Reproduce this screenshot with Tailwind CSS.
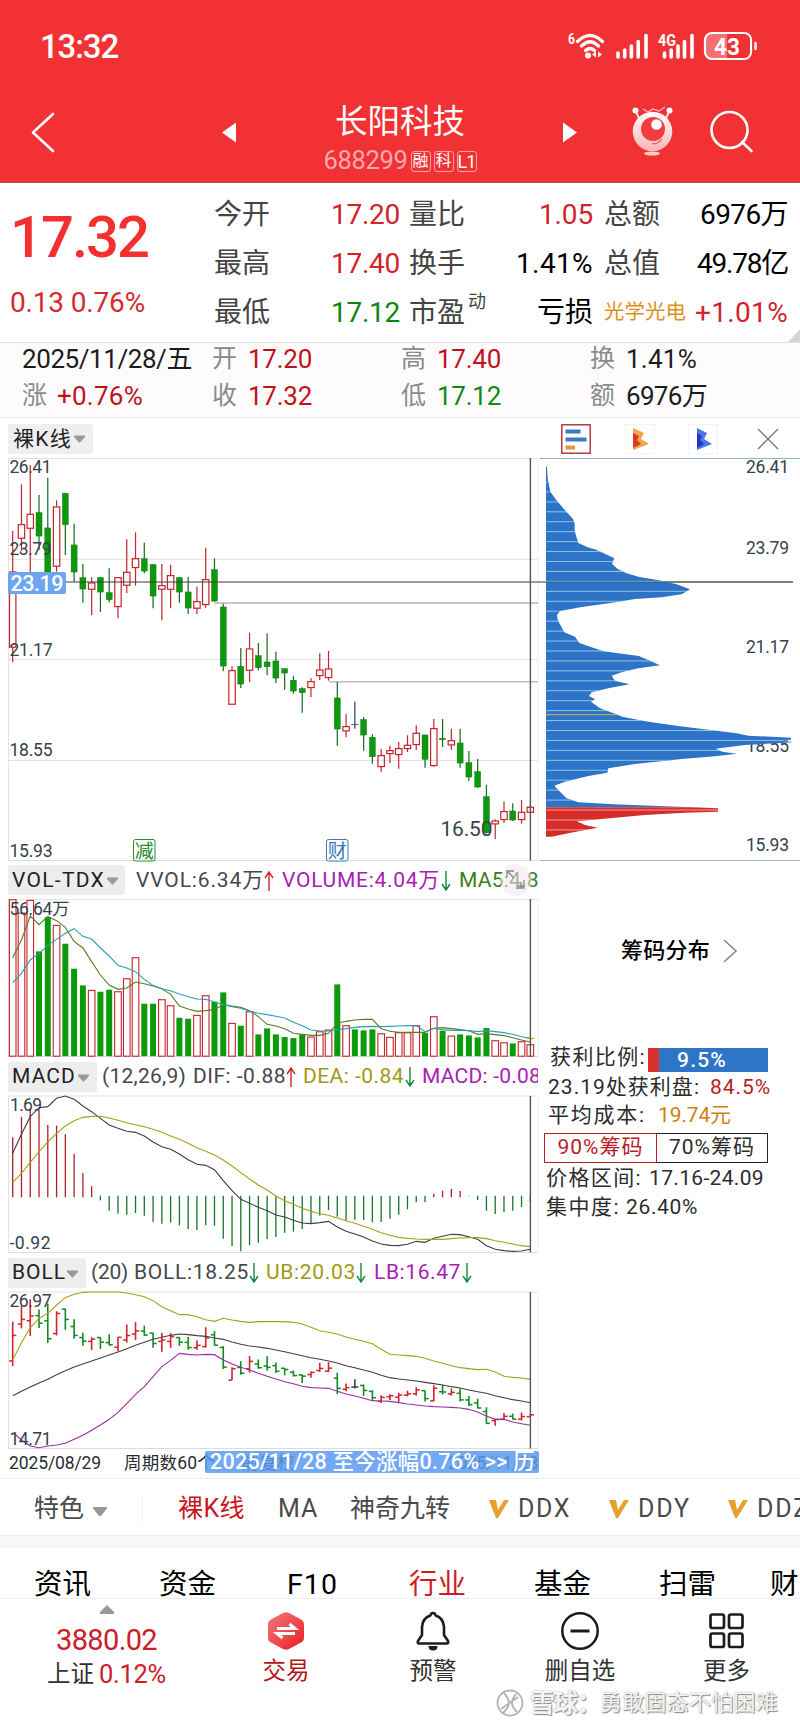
<!DOCTYPE html>
<html lang="zh-CN">
<head>
<meta charset="utf-8">
<title>长阳科技 688299</title>
<script src="https://cdn.jsdelivr.net/npm/@tailwindcss/browser@4"></script>
</head>
<body class="w-[800px] h-[1727px] overflow-hidden bg-white font-['Roboto','Noto_Sans_CJK_SC',sans-serif] text-[#222] whitespace-nowrap leading-none">

<!-- header -->
<header class="h-[183px] bg-[#f13133] border-b border-[#c9403c] text-white">
  <div class="h-[92px] flex items-center pl-[40px] pr-[42px] justify-between">
    <span data-w="78" class="text-[33px] font-medium">13:32</span>
    <svg class="w-[192px] h-[30px]" viewBox="566 31 192 30" fill="none" stroke="#fff" stroke-linecap="round">
      <text x="568" y="44" font-size="15" font-weight="700" fill="#fff" stroke="none" textLength="7" lengthAdjust="spacingAndGlyphs">6</text>
      <path d="M577.500 41.500Q590 29.500 602.500 41.500M581.500 46Q590 37.500 598.500 46M585.500 50.500Q590 46.500 594.500 50.500" stroke-width="3.200"/>
      <circle cx="588" cy="55.500" r="3" fill="#fff" stroke="none"/>
      <path d="M596 51.500v6l-4-3zM598 51.500v6l4-3z" fill="#fff" stroke="none"/>
      <path d="M618 53v4M624.700 50v7M631.400 46v11M638.200 41.500V57M646 35.500V57" stroke-width="3.600"/>
      <text x="658" y="46" font-size="17" font-weight="700" fill="#fff" stroke="none" textLength="18" lengthAdjust="spacingAndGlyphs">4G</text>
      <path d="M664.500 53v4M671.200 50v7M678 46v11M684.500 41.500V57M692 35.500V57" stroke-width="3.600"/>
      <rect x="705" y="33" width="46" height="26" rx="7" fill="#f6706f" stroke-width="2.200"/>
      <path d="M727 34h17a6 6 0 0 1 6 6v12a6 6 0 0 1-6 6H727z" fill="#f13133" stroke="none"/>
      <path d="M755.500 43v6" stroke-width="2.500"/>
      <text x="714" y="54.500" font-size="24" font-weight="700" fill="#fff" stroke="none" textLength="26" lengthAdjust="spacingAndGlyphs">43</text>
    </svg>
  </div>
  <div class="h-[90px] flex items-start pt-[12px]">
    <svg class="w-[40px] h-[50px] ml-[24px] mt-[4px] shrink-0" viewBox="24 108 40 50" fill="none" stroke="#fff" stroke-width="2.600" stroke-linecap="round" stroke-linejoin="round"><path d="M53 114L33 132.500L53 151"/></svg>
    <svg class="w-[20px] h-[30px] ml-[156px] mt-[14px] shrink-0" viewBox="220 118 20 30"><path d="M236 122.500v20L222 132.500z" fill="#fff"/></svg>
    <div class="w-[320px] shrink-0 flex flex-col items-center pt-px">
      <span class="text-[32.500px] leading-[34px]">长阳科技</span>
      <div class="flex items-center gap-[3px] mt-[11px] h-[22px]">
        <span data-w="84" class="text-[25.500px] text-[#f9aaaa]">688299</span>
        <span class="w-[20px] h-[21px] border border-[#f9a5a5] rounded-[3px] text-[16px] leading-[18px] text-center">融</span>
        <span class="w-[20px] h-[21px] border border-[#f9a5a5] rounded-[3px] text-[16px] leading-[18px] text-center">科</span>
        <span class="w-[20px] h-[21px] border border-[#f9a5a5] rounded-[3px] text-[18px] leading-[20px] text-center tracking-[-1px]">L1</span>
      </div>
    </div>
    <svg class="w-[20px] h-[30px] mt-[14px] shrink-0" viewBox="560 118 20 30"><path d="M563 122.500v20l14-10z" fill="#fff"/></svg>
    <svg class="w-[44px] h-[54px] ml-[50px] shrink-0" viewBox="630 106 44 54">
      <defs><linearGradient id="pk" x1="0" y1="0" x2="0" y2="1"><stop offset="0" stop-color="#fff"/><stop offset="1" stop-color="#f9b4b4"/></linearGradient></defs>
      <path d="M643 111l5 3 5-3 6 2 6-4" fill="none" stroke="#fbb" stroke-width="1.200"/>
      <path d="M636 114l4 8M669 114l-4 8" stroke="#fdd" stroke-width="2"/>
      <circle cx="635.500" cy="112.500" r="3" fill="#fff"/><circle cx="669.500" cy="112.500" r="3" fill="#fff"/>
      <circle cx="652.500" cy="133.500" r="19.800" fill="url(#pk)"/>
      <circle cx="653" cy="131" r="12" fill="#f13d3e"/><circle cx="656.500" cy="126.500" r="5.300" fill="#fff"/>
      <path d="M652 145.500q7 1 9.500-4.500" fill="none" stroke="#e66" stroke-width="1.500"/>
      <ellipse cx="652" cy="155.500" rx="8" ry="2" fill="#fcc"/>
    </svg>
    <svg class="w-[48px] h-[48px] ml-[34px] mt-[3px] shrink-0" viewBox="708 108 48 48" fill="none" stroke="#fff" stroke-width="2.600" stroke-linecap="round"><circle cx="729.500" cy="131" r="18"/><path d="M742 143l9.500 9"/></svg>
  </div>
</header>

<!-- quote -->
<section class="relative h-[160px] border-b border-[#dedede] flex pt-[7px] text-[28px]">
  <div class="w-[214px] pl-[10px] flex flex-col">
    <span data-w="138" class="text-[58px] leading-[60px] font-medium text-[#f2302f] mt-[17px]">17.32</span>
    <span data-w="135" class="text-[#d62a2c] leading-[30px] mt-[21px]">0.13 0.76%</span>
  </div>
  <div class="w-[186px] mr-[9px]">
    <div class="h-[49px] flex items-center justify-between"><span class="text-[#444]">今开</span><span data-w="69" class="text-[#d2232a]">17.20</span></div>
    <div class="h-[49px] flex items-center justify-between"><span class="text-[#444]">最高</span><span data-w="69" class="text-[#d2232a]">17.40</span></div>
    <div class="h-[49px] flex items-center justify-between"><span class="text-[#444]">最低</span><span data-w="69" class="text-[#0a870f]">17.12</span></div>
  </div>
  <div class="w-[184px] mr-[11px]">
    <div class="h-[49px] flex items-center justify-between"><span class="text-[#444]">量比</span><span data-w="54" class="text-[#d2232a]">1.05</span></div>
    <div class="h-[49px] flex items-center justify-between"><span class="text-[#444]">换手</span><span data-w="77" class="text-black">1.41%</span></div>
    <div class="h-[49px] flex items-center justify-between"><span class="text-[#444] flex">市盈<span class="text-[18px] ml-[3px] -mt-[6px]">动</span></span><span class="text-black">亏损</span></div>
  </div>
  <div class="w-[184px]">
    <div class="h-[49px] flex items-center justify-between"><span class="text-[#444]">总额</span><span data-w="88" class="text-black">6976万</span></div>
    <div class="h-[49px] flex items-center justify-between"><span class="text-[#444]">总值</span><span data-w="91" class="text-black">49.78亿</span></div>
    <div class="h-[49px] flex items-center justify-between"><span class="text-[20.500px] text-[#df9018]">光学光电</span><span data-w="93" class="text-[#d2232a]">+1.01%</span></div>
  </div>
  <svg class="absolute right-0 bottom-0 w-[12px] h-[13px]" viewBox="0 0 12 13"><path d="M12 0v13H0z" fill="#d5d5d5"/></svg>
</section>

<!-- selected day -->
<section class="h-[75px] bg-[#fdfbfc] border-b border-[#ececec] text-[26px] text-[#1c1c1c]">
  <div class="h-[31px] flex items-center pl-[22px]">
    <span data-w="170">2025/11/28/五</span>
    <span class="ml-[20px] w-[36px] text-[25px] text-[#8b8b8b]">开</span><span class="w-[153px] text-[#c1121b]"><span data-w="64">17.20</span></span>
    <span class="w-[36px] text-[25px] text-[#8b8b8b]">高</span><span class="w-[153px] text-[#c1121b]"><span data-w="64">17.40</span></span>
    <span class="w-[36px] text-[25px] text-[#8b8b8b]">换</span><span data-w="71">1.41%</span>
  </div>
  <div class="h-[43px] flex items-center pl-[22px]">
    <span class="w-[35px] text-[25px] text-[#8b8b8b]">涨</span><span class="w-[155px] text-[#c1121b]"><span data-w="86">+0.76%</span></span>
    <span class="w-[36px] text-[25px] text-[#8b8b8b]">收</span><span class="w-[153px] text-[#c1121b]"><span data-w="64">17.32</span></span>
    <span class="w-[36px] text-[25px] text-[#8b8b8b]">低</span><span class="w-[153px] text-[#0f8a14]"><span data-w="64">17.12</span></span>
    <span class="w-[36px] text-[25px] text-[#8b8b8b]">额</span><span data-w="81">6976万</span>
  </div>
</section>

<!-- charts -->
<main class="flex h-[1061px] border-b border-[#ececec]">
  <div class="w-[540px] flex flex-col">
    <div class="h-[40px] flex items-center pl-[8px] pt-[2px]">
      <div class="w-[85px] h-[30px] bg-[#efefef] rounded-[3px] flex items-center pl-[5px]"><span data-w="59" class="text-[21px]">裸K线</span><svg class="w-[13px] h-[8px] ml-[1px] shrink-0" viewBox="0 0 13 8"><path d="M1 .5h11L12 2 7 7.500H6L1 2z" fill="#999"/></svg></div>
    </div>
    <svg id="kline" class="w-[540px] h-[404px] shrink-0" viewBox="0 458 540 404"></svg>

    <div class="h-[36px] w-[538px] overflow-hidden relative flex items-center pt-px pl-[8px] text-[21px]">
      <div class="w-[117px] h-[30px] shrink-0 bg-[#ededed] rounded-[3px] flex items-center pl-[4px] -mt-[1px]"><span data-w="93">VOL-TDX</span><svg class="w-[13px] h-[8px] ml-[1px] mt-[2px] shrink-0" viewBox="0 0 13 8"><path d="M1 .5h11L12 2 7 7.500H6L1 2z" fill="#999"/></svg></div>
      <span data-w="128" class="ml-[11px] text-[#44484c]">VVOL:6.34万</span>
      <svg class="w-[10px] h-[22px] shrink-0" viewBox="0 0 10 22"><path d="M5 21V2M1 8l4-6 4 6" fill="none" stroke="#d2232a" stroke-width="1.400"/></svg>
      <span data-w="158" class="ml-[8px] text-[#a820b0]">VOLUME:4.04万</span>
      <svg class="w-[10px] h-[22px] shrink-0 ml-[1px]" viewBox="0 0 10 22"><path d="M5 1v19M1 14l4 6 4-6" fill="none" stroke="#16883c" stroke-width="1.400"/></svg>
      <span data-w="113" class="ml-[8px] text-[#3b7d20]">MA5:4.84万</span>
      <svg class="absolute right-[5px] top-[1px] w-[34px] h-[34px]" viewBox="0 0 34 34"><circle cx="17" cy="17" r="16" fill="#f3e6f5" fill-opacity=".55"/><path d="M8 14V8h7M8 8l7 7M17 25h8V17M19 23h5M22 19v6" fill="none" stroke="#888" stroke-width="1.300"/></svg>
    </div>
    <svg id="vol" class="w-[540px] h-[160px] shrink-0" viewBox="0 898 540 160"></svg>

    <div class="h-[36px] w-[538px] overflow-hidden flex items-center pt-px pl-[8px] text-[21px]">
      <div class="w-[89px] h-[30px] shrink-0 bg-[#ededed] rounded-[3px] flex items-center pl-[4px]"><span data-w="64">MACD</span><svg class="w-[13px] h-[8px] ml-[1px] mt-[2px] shrink-0" viewBox="0 0 13 8"><path d="M1 .5h11L12 2 7 7.500H6L1 2z" fill="#999"/></svg></div>
      <span data-w="84" class="ml-[5px] text-[#44484c]">(12,26,9)</span>
      <span data-w="93" class="ml-[7px] text-[#44484c]">DIF: -0.88</span>
      <svg class="w-[10px] h-[22px] shrink-0" viewBox="0 0 10 22"><path d="M5 21V2M1 8l4-6 4 6" fill="none" stroke="#d2232a" stroke-width="1.400"/></svg>
      <span data-w="101" class="ml-[7px] text-[#a09a10]">DEA: -0.84</span>
      <svg class="w-[10px] h-[22px] shrink-0 ml-[1px]" viewBox="0 0 10 22"><path d="M5 1v19M1 14l4 6 4-6" fill="none" stroke="#16883c" stroke-width="1.400"/></svg>
      <span data-w="119" class="ml-[7px] text-[#a820b0]">MACD: -0.08</span>
    </div>
    <svg id="macd" class="w-[540px] h-[160px] shrink-0" viewBox="0 1094 540 160"></svg>

    <div class="h-[36px] w-[538px] overflow-hidden flex items-center pt-px pl-[8px] text-[21px]">
      <div class="w-[78px] h-[30px] shrink-0 bg-[#ededed] rounded-[3px] flex items-center pl-[4px]"><span data-w="54">BOLL</span><svg class="w-[13px] h-[8px] mt-[2px] shrink-0" viewBox="0 0 13 8"><path d="M1 .5h11L12 2 7 7.500H6L1 2z" fill="#999"/></svg></div>
      <span data-w="37" class="ml-[5px] text-[#44484c]">(20)</span>
      <span data-w="115" class="ml-[6px] text-[#44484c]">BOLL:18.25</span>
      <svg class="w-[10px] h-[22px] shrink-0" viewBox="0 0 10 22"><path d="M5 1v19M1 14l4 6 4-6" fill="none" stroke="#16883c" stroke-width="1.400"/></svg>
      <span data-w="90" class="ml-[7px] text-[#a09a10]">UB:20.03</span>
      <svg class="w-[10px] h-[22px] shrink-0" viewBox="0 0 10 22"><path d="M5 1v19M1 14l4 6 4-6" fill="none" stroke="#16883c" stroke-width="1.400"/></svg>
      <span data-w="87" class="ml-[8px] text-[#a820b0]">LB:16.47</span>
      <svg class="w-[10px] h-[22px] shrink-0 ml-[1px]" viewBox="0 0 10 22"><path d="M5 1v19M1 14l4 6 4-6" fill="none" stroke="#16883c" stroke-width="1.400"/></svg>
    </div>
    <svg id="boll" class="w-[540px] h-[160px] shrink-0" viewBox="0 1290 540 160"></svg>

    <div class="relative h-[28px] flex items-center pl-[9px] text-[17.500px] text-[#2a2d30]">
      <span data-w="92">2025/08/29</span>
      <span data-w="91" class="ml-[23px]">周期数60个</span>
      <span data-w="54" class="ml-[26px]">前复权</span>
      <span data-w="90" class="ml-[153px]">2025/11/28</span>
      <div class="absolute left-[205px] top-[1px] w-[334px] h-[22px] bg-[#5a9af0]/85 rounded-[2px] overflow-hidden flex items-center pl-[5px] text-[21.500px] font-medium text-white"><span data-w="325">2025/11/28 至今涨幅0.76% &gt;&gt; 历</span></div>
    </div>
  </div>

  <div class="w-[260px] flex flex-col">
    <div class="h-[40px] flex items-center pl-[21px] pt-[2px]">
      <svg class="w-[30px] h-[30px]" viewBox="0 0 30 30"><rect x=".8" y=".8" width="28.400" height="28.400" fill="#fff" stroke="#a81e22" stroke-width="1.300"/><path d="M4.500 7.500h15M4.500 15.500h21" stroke="#3f78c8" stroke-width="4"/><path d="M4.500 23.500H14" stroke="#dd9a3a" stroke-width="4"/></svg>
      <svg class="w-[30px] h-[30px] ml-[34px]" viewBox="0 0 30 30"><rect x=".5" y=".5" width="29" height="29" fill="#fff" stroke="#f3f3f3"/><path d="M8 4l11 5-3 6 8 5-16 6z" fill="#f0a848"/><path d="M8 9l6 3-2 4 4 4-8 4z" fill="#da3a22"/></svg>
      <svg class="w-[30px] h-[30px] ml-[33px]" viewBox="0 0 30 30"><rect x=".5" y=".5" width="29" height="29" fill="#fff" stroke="#f3f3f3"/><path d="M9 4l10 5-3 6 8 5-15 6z" fill="#4a78e0"/><path d="M9 9l5 3-2 4 4 4-7 4z" fill="#2430d0"/></svg>
      <svg class="w-[22px] h-[22px] ml-[39px]" viewBox="0 0 22 22"><path d="M1 1l20 20M21 1L1 21" stroke="#777" stroke-width="1.300"/></svg>
    </div>
    <svg id="chips" class="w-[260px] h-[404px] shrink-0" viewBox="540 458 260 404"></svg>
    <div class="flex items-center pl-[81px] mt-[76px] h-[26px]"><span data-w="89" class="text-[22px] text-black font-medium">筹码分布</span><svg class="w-[16px] h-[26px] ml-[12px]" viewBox="0 0 16 26"><path d="M2 2l12 11L2 24" fill="none" stroke="#888" stroke-width="1.600"/></svg></div>
    <div class="mt-[78px] text-[21px] text-[#2c2c2c]">
      <div class="h-[31px] flex items-center pl-[10px]"><span data-w="96">获利比例:</span>
        <div class="ml-[2px] mt-[4px] w-[120px] h-[24px] bg-[#2e75c8] border-l-[11px] border-[#d93030] text-white font-medium leading-[24px] pl-[18px]"><span data-w="50">9.5%</span></div></div>
      <div class="h-[28px] flex items-center pl-[8px]"><span data-w="152">23.19处获利盘:</span><span data-w="61" class="ml-[10px] text-[#b81c26]">84.5%</span></div>
      <div class="h-[29px] flex items-center pl-[8px]"><span data-w="98">平均成本:</span><span data-w="73" class="ml-[12px] text-[#d08010]">19.74元</span></div>
      <div class="h-[34px] flex items-center pl-[4px] pt-px">
        <span class="w-[113px] h-[30px] border border-[#b81c26] text-[#b81c26] leading-[27px] text-center"><span data-w="86">90%筹码</span></span>
        <span class="w-[111px] h-[30px] border border-l-0 border-[#222] leading-[27px] text-center"><span data-w="86">70%筹码</span></span></div>
      <div class="h-[28px] flex items-center pl-[6px]"><span data-w="96">价格区间:</span><span data-w="115" class="ml-[7px]">17.16-24.09</span></div>
      <div class="h-[31px] flex items-center pl-[6px]"><span data-w="74">集中度:</span><span data-w="72" class="ml-[6px]">26.40%</span></div>
    </div>
  </div>
</main>

<!-- indicator tabs -->
<nav class="h-[57px] flex items-center pt-[3px] pl-[34px] text-[25px] text-[#4a4a4a] overflow-hidden border-b border-[#eee]">
  <span class="shrink-0">特色</span><svg class="w-[16px] h-[11px] ml-[8px] mt-[6px] shrink-0" viewBox="0 0 16 11"><path d="M1 1h14v1.500L9 10H7L1 2.500z" fill="#999"/></svg>
  <span class="w-px h-[27px] bg-[#eee] ml-[34px] shrink-0"></span>
  <span data-w="67" class="ml-[35px] text-[#c9151e]">裸K线</span>
  <span data-w="40" class="ml-[33px]">MA</span>
  <span class="ml-[32px] shrink-0">神奇九转</span>
  <svg class="w-[20px] h-[20px] ml-[39px] shrink-0" viewBox="0 0 20 20"><path d="M0 1h7l2 10 6-10h5L9 19H7z" fill="#e5a030"/></svg>
  <span data-w="53" class="ml-[9px]">DDX</span>
  <svg class="w-[20px] h-[20px] ml-[38px] shrink-0" viewBox="0 0 20 20"><path d="M0 1h7l2 10 6-10h5L9 19H7z" fill="#e5a030"/></svg>
  <span data-w="53" class="ml-[9px]">DDY</span>
  <svg class="w-[20px] h-[20px] ml-[37px] shrink-0" viewBox="0 0 20 20"><path d="M0 1h7l2 10 6-10h5L9 19H7z" fill="#e5a030"/></svg>
  <span data-w="53" class="ml-[9px]">DDZ</span>
</nav>
<div class="h-[12px] bg-[#f7f7f7]"></div>

<!-- content tabs -->
<nav class="h-[51px] flex items-start pt-[22px] pl-[34px] text-[28.500px] leading-[30px] text-black overflow-hidden border-b border-[#ececec]">
  <span class="w-[125px] shrink-0">资讯</span><span class="w-[128px] shrink-0">资金</span><span class="w-[122px] shrink-0"><span data-w="51">F10</span></span>
  <span class="w-[125px] shrink-0 text-[#cf1c22]">行业</span><span class="w-[125px] shrink-0">基金</span><span class="w-[111px] shrink-0">扫雷</span><span>财</span>
</nav>

<!-- bottom bar -->
<footer class="relative h-[128px] flex text-[23.500px] text-[#333]">
  <div class="w-[213px] flex flex-col items-center pt-[6px]">
    <svg class="w-[14px] h-[9px]" viewBox="0 0 14 9"><path d="M7 0l7 7v2H0V7z" fill="#999"/></svg>
    <span data-w="101" class="text-[29px] leading-[30px] text-[#c9202a] mt-[11px]">3880.02</span>
    <div class="flex items-center h-[30px] mt-[5px]"><span>上证</span><span data-w="67" class="text-[25.500px] text-[#c9202a] ml-[5px]">0.12%</span></div>
  </div>
  <div class="w-[146px] flex flex-col items-center pt-[11px]">
    <svg class="w-[40px] h-[42px]" viewBox="0 0 40 42"><defs><linearGradient id="hx" x1="0" y1="0" x2="1" y2="1"><stop offset="0" stop-color="#f27a7a"/><stop offset="1" stop-color="#e81e26"/></linearGradient></defs><path d="M17 3q3-1.600 6 0l12 6.500q3 1.500 3 5v13q0 3.500-3 5L23 39q-3 1.600-6 0L5 32.500q-3-1.500-3-5v-13q0-3.500 3-5z" fill="url(#hx)"/><path d="M11 18.500h18l-5.500-4.500M29 23.500H11l5.500 4.500" fill="none" stroke="#fff" stroke-width="3"/></svg>
    <span class="mt-[8px] text-[#b81420]">交易</span>
  </div>
  <div class="w-[148px] flex flex-col items-center pt-[11px]">
    <svg class="w-[40px] h-[42px]" viewBox="0 0 40 42"><path d="M20 3q2 0 2.600 2.500Q30.500 8 31 17v8l4 6q1 2.500-1.500 2.500h-27Q4 33.500 5 31l4-6v-8Q9.500 8 17.400 5.500 18 3 20 3z" fill="none" stroke="#1c1c1c" stroke-width="2.600" stroke-linejoin="round"/><path d="M15.500 36h9q0 4.500-4.500 4.500T15.500 36z" fill="#1c1c1c"/></svg>
    <span class="mt-[8px]">预警</span>
  </div>
  <div class="w-[146px] flex flex-col items-center pt-[11px]">
    <svg class="w-[40px] h-[42px]" viewBox="0 0 40 42"><circle cx="20" cy="21" r="17.700" fill="none" stroke="#1c1c1c" stroke-width="2.500"/><path d="M10.500 21h19" stroke="#1c1c1c" stroke-width="3"/></svg>
    <span class="mt-[8px]">删自选</span>
  </div>
  <div class="w-[147px] flex flex-col items-center pt-[11px]">
    <svg class="w-[40px] h-[42px]" viewBox="0 0 40 42" fill="none" stroke="#1c1c1c" stroke-width="2.700"><rect x="3.500" y="4.500" width="13.500" height="13.500" rx="2"/><rect x="22" y="4.500" width="13.500" height="13.500" rx="2"/><rect x="3.500" y="23.500" width="13.500" height="13.500" rx="2"/><rect x="22" y="23.500" width="13.500" height="13.500" rx="2"/></svg>
    <span class="mt-[8px]">更多</span>
  </div>
  <div class="absolute left-[496px] top-[90px] h-[28px] flex items-center text-[#f4f4f4] [text-shadow:1px_1px_1px_#888,0_0_2px_#aaa]">
    <svg class="w-[28px] h-[28px]" viewBox="0 0 28 28" fill="none" stroke="#b5b5b5"><circle cx="14" cy="14" r="12.500" stroke-width="1.800"/><path d="M8 4q5 6 5 10T7 24M20 5q-4 5-4 9t5 9M5 20L22 8" stroke-width="2"/></svg>
    <span data-w="70" class="ml-[6px] text-[25px] font-bold">雪球：</span><span data-w="178" class="text-[22px]">勇敢固态不怕困难</span>
  </div>
</footer>

<script>
const runs = [...document.querySelectorAll('[data-w]')];
function fitRuns() {
  runs.forEach(e => { e.style.cssText = 'display:inline-block;flex-shrink:0;width:max-content;letter-spacing:0'; });
  const widths = runs.map(e => e.getBoundingClientRect().width);
  runs.forEach((e, i) => {
    const w = +e.dataset.w;
    e.style.letterSpacing = ((w - widths[i]) / e.textContent.length) + 'px';
    e.style.width = w + 'px';
  });
}
fitRuns();
new ResizeObserver(fitRuns).observe(document.body);
new MutationObserver(fitRuns).observe(document.head, { childList: true });
addEventListener('load', () => { fitRuns(); requestAnimationFrame(fitRuns); setTimeout(fitRuns, 60); });
document.fonts.ready.then(fitRuns);

const X = i => 12.7 + i * 8.773;
const RED = '#c4242b', GRN = '#0a9a0a', DK = '#17691f';
const line = (x1, y1, x2, y2, c, w = 1) => `<line x1="${x1}" y1="${y1}" x2="${x2}" y2="${y2}" stroke="${c}" stroke-width="${w}"/>`;
const rect = (x, y, w, h, f, s = 'none', sw = 1.1) => `<rect x="${x}" y="${y}" width="${w}" height="${h}" fill="${f}" stroke="${s}" stroke-width="${sw}"/>`;
const text = (s, x, y, w, size = 17.5, c = '#36424c', wt = 400) => `<text x="${x}" y="${y}" font-size="${size}" fill="${c}" font-weight="${wt}" textLength="${w}">${s}</text>`;
const poly = (a, base, c) => `<polyline fill="none" stroke="${c}" stroke-width="1.1" points="${a.map((v, i) => X(i) + ',' + (base + v / 3)).join(' ')}"/>`;
const frame = (t, b) => line(8, t, 538, t, '#e2e2e2') + line(8, b, 538, b, '#dcdcdc') + line(8.5, t, 8.5, b, '#e2e2e2') + line(538, t, 538, b, '#f0f0f0');

// type, high, body top, body bottom, low
const K = `r348 470 697 742,r208 328 370 408,r150 297 340 475,g240 294 362 405,g188 340 500 537,r256 275 454 470,g233 236 328 420,g326 391 470 500,g447 489 521 563,r487 503 523 600,g486 489 530 591,g460 534 553 562,r487 487 575 610,r373 471 511 534,r352 430 458 512,g383 432 467 475,g447 450 542 580,r447 511 523 616,r449 481 523 580,g486 489 530 563,g485 532 578 597,r515 559 580 597,r398 493 569 578,g430 465 557 561,g566 577 752 769,r754 766 868 868,g699 755 806 819,r653 701 766 801,g684 723 757 766,g655 742 754 781,g710 739 788 804,g760 762 773 824,g782 797 827 836,g817 822 832 893,r790 799 818 846,r715 764 782 795,r708 761 788 797,g801 850 941 992,r898 934 948 967,d860 929 929 941,g907 915 959 1007,g958 968 1024 1046,r1002 1021 1055 1070,r992 1006 1016 1044,r981 1000 1019 1061,r961 990 1001 1011,r931 954 989 1005,g959 961 1032 1058,r912 940 1052 1055,g912 971 973 996,r941 976 990 1005,g941 985 1043 1058,g1008 1044 1085 1098,g1032 1071 1115 1118,g1109 1146 1252 1256,r1213 1217 1227 1273,r1160 1189 1214 1224,g1165 1189 1214 1218,r1155 1191 1214 1226,r1170 1176 1192 1192`
  .split(',').map(s => [s[0], ...s.slice(1).split(' ').map(Number)]);

let s = frame(458.5, 860.5) + [559.3, 659.5, 760.5].map(y => line(8, y, 538, y, '#e2e2e2')).join('');
s += line(215, 603, 538, 603, '#c6c6ca', 2) + line(329, 681.8, 538, 681.8, '#bcbcbc', 1.6);
K.forEach(([t, h, a, b, l], i) => {
  const x = X(i), y = v => 415 + v / 3;
  if (t == 'r') s += line(x, y(h), x, y(a), RED, 1.2) + line(x, y(b), x, y(l), RED, 1.2) + rect(x - 3.2, y(a) + .3, 6.4, Math.max(1.5, (b - a) / 3 - .4), 'none', RED, 1.2);
  else { const c = t == 'd' ? '#333d55' : GRN; s += line(x, y(h), x, y(l), t == 'd' ? c : DK, 1.2) + rect(x - (t == 'd' ? 3.6 : 3), y(a) - .4, t == 'd' ? 7.2 : 6, (b - a) / 3 + .8, c, t == 'd' ? 'none' : DK, .4); }
});
s += line(8, 582, 540, 582, '#3c3c3c', 1.2) + line(530.4, 458, 530.4, 860.5, '#555', 1.4);
s += text('26.41', 9.500, 473, 42) + text('23.79', 9.500, 555, 42) + text('21.17', 9.500, 655.500, 43) + text('18.55', 9.500, 756, 43) + text('15.93', 9.500, 856.500, 43);
s += `<rect x="8" y="572" width="58" height="22" rx="2" fill="#6ea5f2"/>` + text('23.19', 10.500, 590.500, 53, 21.5, '#fff', 500);
s += text('16.50', 440.500, 836, 52, 21);
const tag = (c, x, k) => `<rect x="${x}" y="839.5" width="21.500" height="21.500" rx="2" fill="#fff" stroke="${k}" stroke-width="1"/>` + text(c, x + 1.2, 857.500, 19, 19, k, 400);
s += tag('减', 133.5, '#2a8a30') + tag('财', 326.5, '#3878b8');
kline.innerHTML = s;

const V = [118,158,120,273,170,195,250,325,375,390,394,388,394,355,292,430,430,418,436,472,475,465,406,424,396,489,496,454,522,504,522,530,533,523,530,514,509,372,496,507,510,507,520,531,517,517,496,518,469,511,527,522,525,531,503,541,547,549,544,553];
s = frame(899.7, 1056.5);
V.forEach((v, i) => { const r = K[i][0] == 'r' || i == 38, y = 860 + v / 3;
  s += rect(X(i) - (r ? 3.3 : 3), y + .4, r ? 6.6 : 6, 1055.8 - y, r ? '#fffdfd' : GRN, r ? RED : 'none', 1.1); });
s += poly([293,240,168,194,169,182,202,244,264,305,345,375,388,384,366,371,378,386,403,438,447,454,452,449,434,438,442,452,470,493,498,506,520,523,526,526,520,490,484,480,478,478,506,514,517,517,517,517,505,503,506,509,512,523,521,524,527,533,540,546], 860, '#5a7d28');
s += poly([368,340,300,280,256,238,220,206,229,237,264,288,316,324,335,358,376,386,392,402,410,417,418,426,434,440,445,454,460,464,469,474,487,497,510,513,513,509,506,502,500,499,500,499,498,497,497,515,505,509,511,511,512,515,512,515,518,523,530,535], 860, '#2c9fb4');
s += line(527, 1038.5, 534, 1038.5, '#b8b020', 1.2) + line(530.4, 899, 530.4, 1056.5, '#555', 1.4) + text('56.64万', 9.5, 914.5, 60);
vol.innerHTML = s;

const M = [832,771,745,750,795,797,823,881,939,979,1021,1052,1061,1064,1059,1067,1086,1091,1088,1096,1107,1110,1096,1097,1136,1158,1174,1155,1148,1137,1131,1118,1115,1107,1092,1067,1050,1070,1082,1079,1080,1087,1086,1076,1064,1048,1027,1027,1001,992,987,993,1009,1020,1052,1062,1056,1052,1041,1025];
s = frame(1096, 1252.5);
M.forEach((v, i) => { s += v < 1008 ? line(X(i), 860 + v / 3, X(i), 1197.3, '#b02028', 1.3) : line(X(i), 1195.7, X(i), 860 + v / 3, '#17752a', 1.3); });
s += poly([880,823,770,743,740,715,708,718,738,755,775,795,805,814,817,828,846,860,868,882,899,913,916,929,962,992,1018,1030,1042,1052,1065,1071,1081,1089,1091,1088,1084,1101,1114,1122,1131,1143,1152,1156,1157,1153,1144,1147,1135,1129,1123,1124,1130,1138,1157,1168,1172,1174,1173,1168], 860, '#3c4044');
s += poly([967,940,907,875,846,820,798,782,772,769,769,774,781,788,794,800,808,817,828,838,850,863,874,885,900,918,938,957,975,990,1008,1022,1033,1045,1054,1061,1066,1074,1082,1090,1099,1108,1118,1126,1132,1135,1137,1138,1138,1138,1136,1134,1133,1133,1136,1142,1147,1152,1157,1160], 860, '#a8a018');
s += line(530.4, 1096, 530.4, 1252.5, '#555', 1.4) + text('1.69', 10, 1110.5, 32) + text('-0.92', 9.5, 1249, 41);
macd.innerHTML = s;

s = frame(1292, 1448.5);
K.forEach(([t, h, a, b, l], i) => { const x = X(i), y = v => 1250 + (215 + (v - 348) * .3376) / 3, c = t == 'r' ? '#d2242c' : t == 'd' ? '#333d55' : '#128a20';
  const o = t == 'g' ? a : b, cl = t == 'g' ? b : a;
  s += line(x, y(h), x, y(l), c, 1.6) + line(x - 3.6, y(o), x, y(o), c, 1.5) + line(x, y(cl), x + 3.6, y(cl), c, 1.5); });
s += poly([330,278,233,205,190,165,143,133,127,126,126,126,126,129,134,140,152,170,182,194,194,200,209,214,205,210,214,217,215,215,215,215,217,222,232,242,247,252,261,268,274,281,298,313,315,317,319,325,333,340,347,353,356,359,358,366,379,382,384,388], 1250, '#a8a018');
s += poly([437,424,411,399,388,374,362,351,342,333,324,315,306,296,286,277,268,262,256,252,254,257,259,264,268,276,283,288,291,295,300,305,311,317,323,328,333,339,347,353,360,367,376,383,387,390,393,397,401,405,410,414,420,425,430,437,443,449,453,458], 1250, '#3c4044');
s += poly([547,570,588,593,588,585,580,568,556,541,525,508,487,461,433,410,380,350,331,310,313,315,313,314,330,342,352,360,370,379,387,395,401,409,413,414,415,424,432,438,445,452,453,454,458,462,465,468,470,471,472,474,478,486,498,508,508,516,521,526], 1250, '#9830a0');
s += line(530.4, 1292, 530.4, 1448.5, '#555', 1.4) + text('26.97', 9.5, 1306.5, 42) + text('14.71', 9.5, 1445, 42);
boll.innerHTML = s;

// chip distribution outline as offset,price-row pairs
const B = '33,155 36,155 38,190 46,230 66,258 92,288 114,312 119,325 119,348 124,365 130,384 158,397 184,404 238,430 231,446 248,462 275,475 310,485 380,497 425,508 465,523 440,538 380,547 300,552 232,563 140,576 75,588 66,600 68,615 88,652 120,665 133,684 205,709 312,723 375,751 310,760 262,771 230,782 240,797 283,808 220,820 170,832 162,843 180,852 168,860 195,880 240,896 262,905 300,913 340,920 430,933 520,944 605,955 640,962 768,968 768,974 740,976 774,982 630,990 542,1001 562,1010 605,1016 540,1024 440,1032 365,1040 300,1047 220,1060 217,1073 160,1083 90,1100 58,1112 75,1130 95,1150 130,1162 235,1168 390,1174 470,1177 33,1177';
const R = '33,1177 470,1177 549,1180 549,1190 450,1193 330,1200 200,1212 125,1219 150,1230 188,1238 130,1249 75,1260 50,1265 33,1265';
let stripes = ''; for (let y = 201; y < 1265; y += 29.82) stripes += `<line x1="33" x2="790" y1="${y}" y2="${y}" stroke="${y > 1177 ? '#f5b0b0' : '#9ed2f0'}" stroke-width="2.600"/>`;
s = line(540, 458.5, 800, 458.5, '#8fb0bc', 1.2) + line(540, 860.5, 800, 860.5, '#a5b2b8', 1.2) + line(540, 582, 793, 582, '#3c3c3c', 1.2);
[['26.41', 473], ['23.79', 554], ['21.17', 653], ['18.55', 751.5], ['15.93', 851]].forEach(([t, y]) => s += text(t, 746, y, 43));
s += `<g transform="translate(535 415) scale(.33333)"><clipPath id="cp"><polygon points="${B}"/><polygon points="${R}"/></clipPath><polygon points="${B}" fill="#2d73c6"/><polygon points="${R}" fill="#d62c2a"/><g clip-path="url(#cp)">${stripes}<line x1="33" x2="262" y1="899" y2="899" stroke="#b9a860" stroke-width="4"/></g></g>` + line(546, 582, 793, 582, '#3c3c3c', .6);
chips.innerHTML = s;
</script>
</body>
</html>
